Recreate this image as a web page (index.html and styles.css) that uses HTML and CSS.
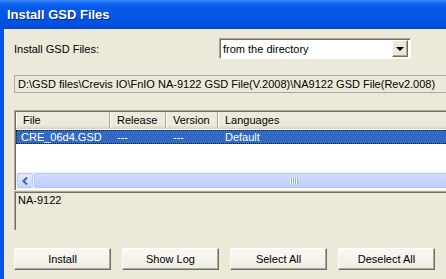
FILE: index.html
```html
<!DOCTYPE html>
<html lang="en">

<head>
    <meta charset="UTF-8">
    <meta name="viewport" content="width=device-width, initial-scale=1.0">
    <title>Install GSD Files</title>
    <link rel="stylesheet" href="styles.css">
</head>

<body>
    <div class="window">
        <div class="titlebar">Install GSD Files</div>
        <div class="client">
            <div class="row source">
                <label>Install GSD Files:</label>
                <div class="combo">
                    <span>from the directory</span>
                    <div class="combo-btn"><span class="arrow"></span></div>
                </div>
            </div>

            <div class="path-box">D:\GSD files\Crevis IO\FnIO NA-9122 GSD File(V.2008)\NA9122 GSD File(Rev2.008)</div>

            <div class="list">
                <div class="list-head">
                    <div class="col file">File</div>
                    <div class="col release">Release</div>
                    <div class="col version">Version</div>
                    <div class="col lang">Languages</div>
                </div>
                <div class="list-body">
                    <div class="list-row selected">
                        <div class="col file">CRE_06d4.GSD</div>
                        <div class="col release">---</div>
                        <div class="col version">---</div>
                        <div class="col lang">Default</div>
                    </div>
                </div>
                <div class="hscroll">
                    <div class="sb-btn">
                        <svg width="7" height="8" viewBox="0 0 7 8"><path d="M5 0.5 L1.5 4 L5 7.5" fill="none" stroke="#4D6185" stroke-width="2"/></svg>
                    </div>
                    <div class="sb-thumb"><span class="grip"></span></div>
                </div>
            </div>

            <div class="info-box">NA-9122</div>

            <div class="buttons">
                <button class="btn">Install</button>
                <button class="btn">Show Log</button>
                <button class="btn">Select All</button>
                <button class="btn">Deselect All</button>
            </div>
        </div>
    </div>
</body>

</html>
```

FILE: styles.css
```css
* {
    margin: 0;
    padding: 0;
    box-sizing: border-box;
    font-family: "Liberation Sans", Arial, sans-serif;
}

html, body {
    width: 446px;
    height: 279px;
    overflow: hidden;
}

body {
    background: #ECE9D8;
    color: #000;
    font-size: 11px;
}

.window {
    width: 446px;
    height: 279px;
    display: flex;
    flex-direction: column;
    background: #0553E8;
}

.titlebar {
    height: 29px;
    flex-shrink: 0;
    padding: 7px 0 0 7px;
    color: #fff;
    font-size: 13px;
    font-weight: bold;
    text-shadow: 1px 1px 0 #0B2A8C;
    background: linear-gradient(#3D8DFA 0, #1468F0 3px, #0459EB 7px, #0355E6 18px, #0350DC 26px, #0148C8 29px);
}

.client {
    flex: 1;
    margin-left: 4px;
    padding: 9px 0 0 10px;
    background: #ECE9D8;
}

.row {
    display: flex;
    align-items: center;
}

.source label {
    width: 205px;
}

.combo {
    width: 192px;
    height: 21px;
    display: flex;
    align-items: center;
    justify-content: space-between;
    padding: 0 2px 0 3px;
    background: #fff;
    border: 1px solid;
    border-color: #ACA899 #fff #fff #ACA899;
    box-shadow: inset 1px 1px 0 #716F64;
}

.combo-btn {
    width: 16px;
    height: 17px;
    display: flex;
    align-items: center;
    justify-content: center;
    background: #ECE9D8;
    border: 1px solid;
    border-color: #fff #716F64 #716F64 #fff;
    box-shadow: inset -1px -1px 0 #ACA899;
}

.arrow {
    width: 0;
    height: 0;
    border-left: 4px solid transparent;
    border-right: 4px solid transparent;
    border-top: 4px solid #000;
}

.path-box {
    width: 432px;
    height: 18px;
    margin-top: 16px;
    padding: 2px 0 0 3px;
    white-space: nowrap;
    overflow: hidden;
    border: 1px solid #A7A6AA;
    border-right: none;
}

.list {
    width: 432px;
    height: 80px;
    margin-top: 17px;
    display: flex;
    flex-direction: column;
    overflow: hidden;
    background: #fff;
    border-top: 1px solid #ACA899;
    border-left: 1px solid #ACA899;
    box-shadow: inset 1px 1px 0 #716F64;
    padding: 1px 0 1px 1px;
}

.col {
    flex-shrink: 0;
    white-space: nowrap;
}

.col.file { width: 94px; }
.col.release { width: 56px; }
.col.version { width: 52px; }
.col.lang { flex: 1; }

.list-head {
    height: 17px;
    display: flex;
    background: #EBEADB;
    border-bottom: 1px solid #D6D2C2;
    box-shadow: inset 0 -2px 0 #E2DECD;
}

.list-head .col {
    padding: 2px 0 0 7px;
    border-right: 1px solid #ACA899;
    box-shadow: 1px 0 0 #fff;
}

.list-head .col.file {
    box-shadow: inset 1px 0 0 #fff, 1px 0 0 #fff;
}

.list-head .col.lang {
    border-right: none;
}

.list-body {
    flex: 1;
    padding-top: 1px;
}

.list-row {
    height: 14px;
    display: flex;
}

.list-row .col {
    padding: 0 0 0 6px;
    line-height: 12px;
}

.list-row .col.file {
    padding-left: 4px;
}

.list-row.selected {
    color: #fff;
    background: #316AC5;
    border: 1px dotted #1A1A1A;
    border-right: none;
}

.hscroll {
    height: 17px;
    display: flex;
    gap: 1px;
    padding: 1px 0 1px 1px;
    background: #F5F4EE;
}

.sb-btn {
    width: 16px;
    display: flex;
    align-items: center;
    justify-content: center;
    border: 1px solid #B7CAF5;
    border-radius: 2px;
    background: linear-gradient(#E1EAFE, #C5D5FC);
}

.sb-thumb {
    flex: 1;
    position: relative;
    border: 1px solid #B7CAF5;
    border-right: none;
    border-radius: 2px 0 0 2px;
    background: linear-gradient(#CFDCFD, #BCCFFB);
}

.grip {
    position: absolute;
    left: 255px;
    top: 4px;
    width: 8px;
    height: 6px;
    background: repeating-linear-gradient(90deg, #fff 0 1px, #8DA8E6 1px 2px);
}

.info-box {
    width: 432px;
    height: 39px;
    margin-top: 1px;
    padding: 2px 0 0 3px;
    border-top: 1px solid #ACA899;
    border-left: 1px solid #ACA899;
    box-shadow: inset 1px 1px 0 #716F64;
}

.buttons {
    display: flex;
    gap: 11px;
    margin-top: 18px;
}

.btn {
    width: 97px;
    height: 22px;
    font-size: 11px;
    color: #000;
    background: linear-gradient(#F8F7F2, #EEEDE5);
    border: 1px solid;
    border-color: #fff #716F64 #716F64 #fff;
    box-shadow: inset -1px -1px 0 #ACA899;
}
```
